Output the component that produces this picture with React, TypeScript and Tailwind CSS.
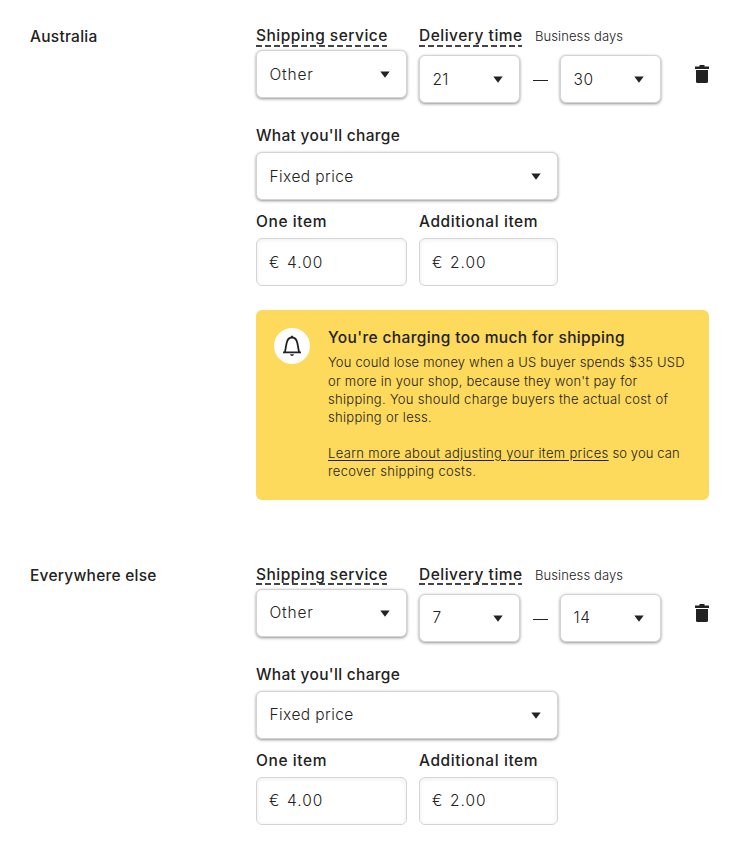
import React from 'react';

function Caret() {
  return (
    <svg className="h-[7px] w-[10px] shrink-0" viewBox="0 0 10 7">
      <path d="M.3 .5h9.400L5 6.700z" fill="#222" />
    </svg>
  );
}

function SelectBox({ value, className, textClass }: { value: string; className: string; textClass: string }) {
  return (
    <button
      type="button"
      className={`flex h-12 items-center justify-between rounded-md border border-[#d4d4d4] bg-white pl-[12.500px] pr-4 text-[15.500px] font-light shadow-[0_1px_3px_rgba(34,34,34,0.5)] ${className}`}
    >
      <span className={`whitespace-nowrap group-data-[first=true]:pt-0.5 ${textClass}`}>{value}</span>
      <Caret />
    </button>
  );
}

function MoneyField({ label, value, className, labelClass }: { label: string; value: string; className: string; labelClass: string }) {
  return (
    <div className={className}>
      <div className={`h-[26px] whitespace-nowrap text-[15.500px] font-medium leading-5 ${labelClass}`}>{label}</div>
      <div className="flex h-12 items-center rounded-md border border-[#d4d4d4] bg-white pl-3 text-[15.500px] font-light shadow-[inset_0_1px_4px_rgba(34,34,34,0.08)] group-data-[first=true]:pt-0.5">
        <span className="w-[18px]">€</span>
        <span className="tracking-[1px]">{value}</span>
      </div>
    </div>
  );
}

function DashedLabel({ children, className }: { children: string; className: string }) {
  return (
    <div className={`h-[21px] ${className}`}>
      <div className="h-[18px] whitespace-nowrap text-[15.500px] font-medium leading-5 tracking-[0.5px] group-data-[first=true]:h-[19px]">{children}</div>
      <div className="h-[2px] w-full bg-[repeating-linear-gradient(90deg,#444_0_6px,transparent_6px_9px)]" />
    </div>
  );
}

function Trash() {
  return (
    <svg className="h-[18px] w-[14px]" viewBox="0 0 14 18" fill="#222">
      <path d="M4.500 0h5v1.500H14V4H0V1.500h4.500z" />
      <path d="M1 5h12v11.500q0 1.500-1.500 1.500h-9Q1 18 1 16.500z" />
    </svg>
  );
}

function Bell() {
  return (
    <svg className="h-[22px] w-[18px]" viewBox="0 0 18 22" fill="none">
      <path d="M0 17.300h18M2 16.800l1.600-8.600C4.300 4.700 6 2.500 9 2.500s4.700 2.200 5.400 5.700l1.600 8.600" stroke="#222" strokeWidth="1.800" />
      <path d="M9 .3l1.700 2H7.300zM7 19.200h4q-.3 1.800-2 1.800t-2-1.800z" fill="#222" />
    </svg>
  );
}

function Notice() {
  return (
    <div className="mt-6 flex h-[190px] w-[453px] rounded-md bg-[#fdd95c] pl-[18px] pt-[18px]">
      <div className="flex size-9 shrink-0 items-center justify-center rounded-full bg-white">
        <Bell />
      </div>
      <div className="ml-[18px]">
        <div className="whitespace-nowrap text-[15.500px] font-medium leading-5 tracking-[0.37px]">You're charging too much for shipping</div>
        <div className="mt-[5.400px] whitespace-nowrap text-[13px] font-[350] leading-[18.200px] text-[#222]">
          <p className="tracking-[0.18px]">You could lose money when a US buyer spends $35 USD</p>
          <p className="tracking-[0.25px]">or more in your shop, because they won't pay for</p>
          <p className="tracking-[0.3px]">shipping. You should charge buyers the actual cost of</p>
          <p className="tracking-[0.3px]">shipping or less.</p>
          <p className="mt-[17.500px] tracking-[0.33px]">
            <span className="underline underline-offset-2">Learn more about adjusting your item prices</span>
            <span className="tracking-[0.12px]"> so you can</span>
          </p>
          <p className="tracking-[0.33px]">recover shipping costs.</p>
        </div>
      </div>
    </div>
  );
}

function Destination({ name, from, to, first }: { name: string; from: string; to: string; first: boolean }) {
  return (
    <section data-first={first} className="group flex h-[539px] pl-[30px] pt-[26px]">
      <h2 className="w-[226px] shrink-0 pt-px text-[15.500px] font-medium leading-5 tracking-[0.25px]">{name}</h2>
      <div>
        <div className="flex h-[100px]">
          <div className="w-[163px]">
            <DashedLabel className="w-[131px]">Shipping service</DashedLabel>
            <SelectBox value="Other" className="mt-[3px] w-[151px]" textClass="tracking-[0.8px]" />
          </div>
          <div className="w-[276px]">
            <div className="flex">
              <DashedLabel className="w-[103px]">Delivery time</DashedLabel>
              <span className="ml-[13px] whitespace-nowrap text-[13px] font-light leading-5 tracking-[0.1px]">Business days</span>
            </div>
            <div className="mt-2 flex items-center">
              <SelectBox value={from} className="w-[101px]" textClass="tracking-[0.3px]" />
              <div className="ml-[13px] mr-3 mt-[3px] h-px w-[15px] bg-[#222]" />
              <SelectBox value={to} className="w-[101px]" textClass="tracking-[0.6px]" />
            </div>
          </div>
          <button type="button" aria-label="Delete" className="mt-[39px] h-[18px]">
            <Trash />
          </button>
        </div>
        <div className="h-[26px] text-[15.500px] font-medium leading-5 tracking-[0.3px]">What you'll charge</div>
        <SelectBox value="Fixed price" className="w-[302px]" textClass="tracking-[0.42px]" />
        <div className="mt-3 flex gap-3">
          <MoneyField label="One item" value="4.00" className="w-[151px]" labelClass="tracking-[0.6px]" />
          <MoneyField label="Additional item" value="2.00" className="w-[139px]" labelClass="tracking-[0.57px]" />
        </div>
        {first && <Notice />}
      </div>
    </section>
  );
}

export default function App() {
  return (
    <main className="h-[847px] w-[730px] overflow-hidden bg-white font-[Inter,'Liberation_Sans',sans-serif] text-[#222]">
      <Destination name="Australia" from="21" to="30" first />
      <Destination name="Everywhere else" from="7" to="14" first={false} />
    </main>
  );
}
